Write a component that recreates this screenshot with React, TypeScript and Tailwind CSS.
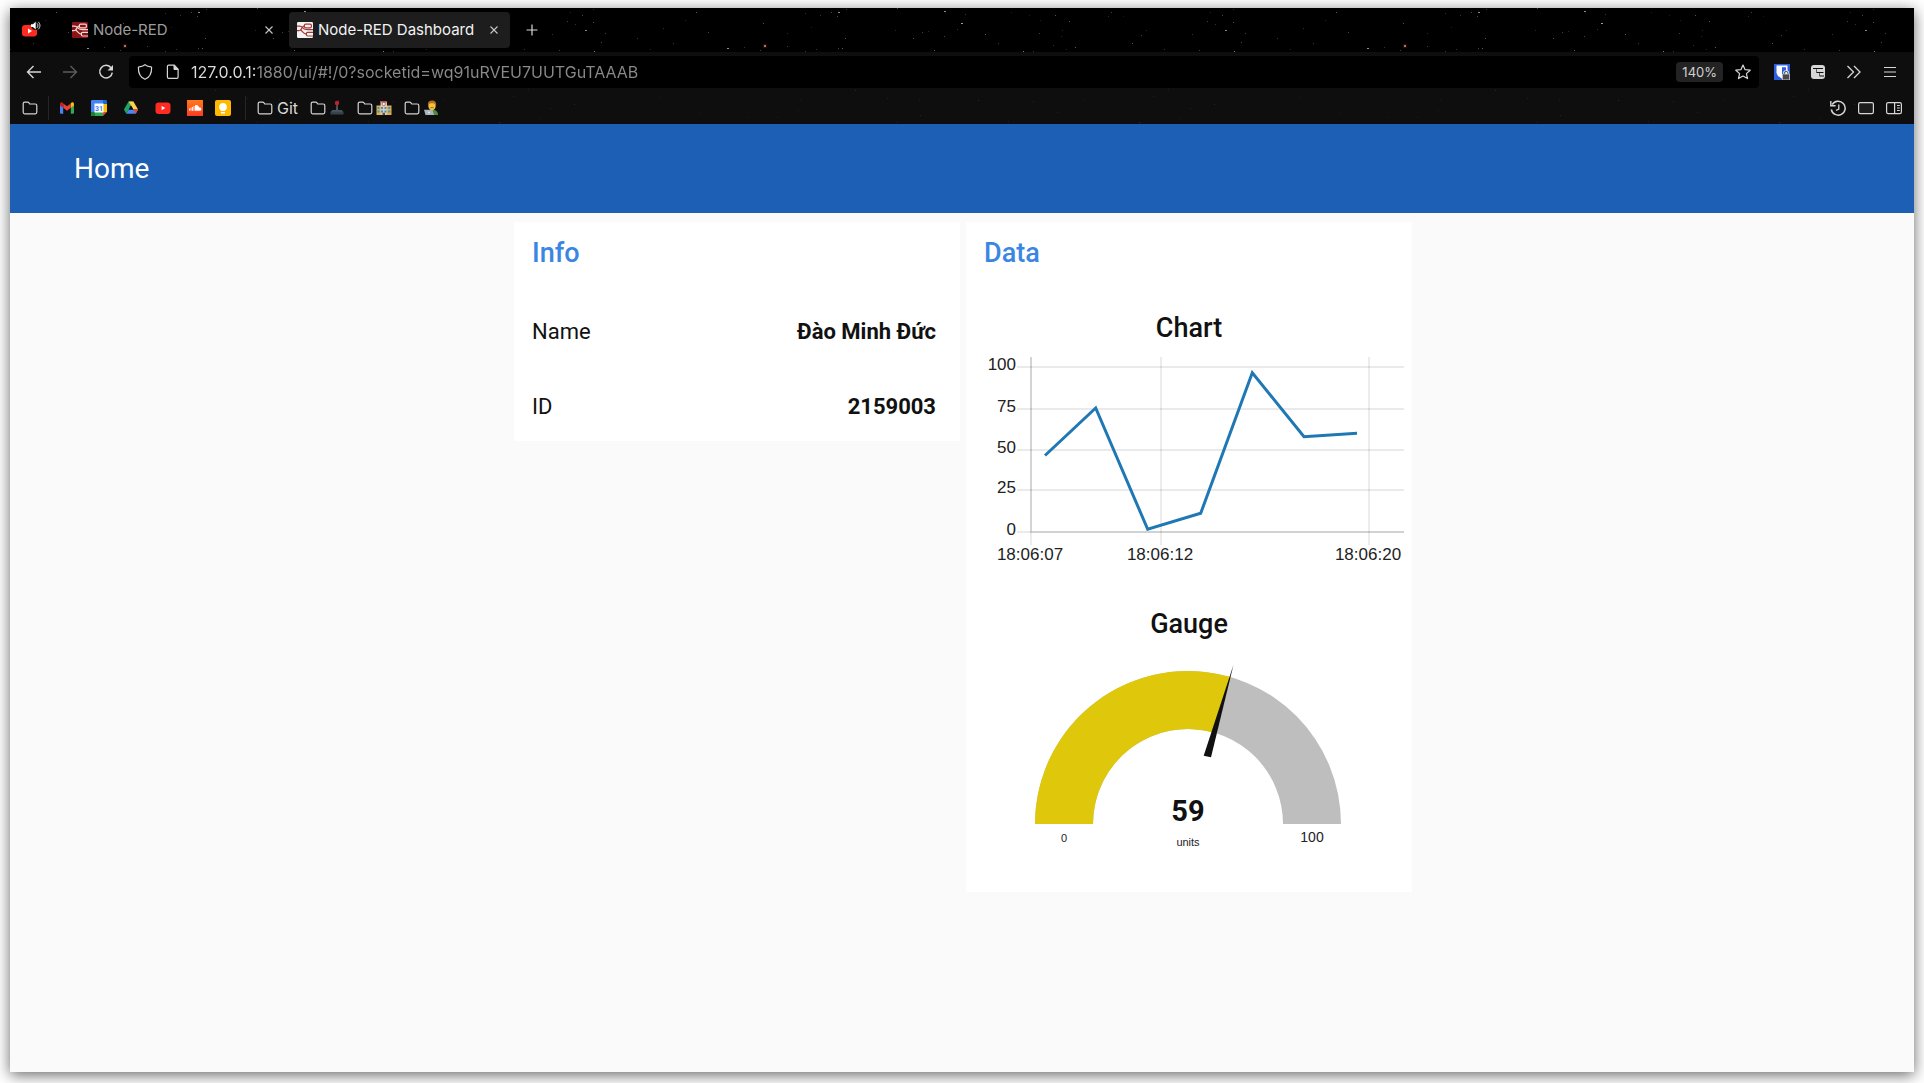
import React from "react";

const stars: [number, number, number][] = [
  [98, 4, 0.7], [97, 8, 0.35], [91, 4, 0.35], [106, 1, 0.25], [157, 0, 0.35], [204, 3, 0.7],
  [221, 15, 0.8], [225, 6, 0.25], [217, 21, 0.25], [245, 26, 0.45], [300, 12, 0.15], [289, 7, 0.15],
  [315, 7, 0.4], [329, 13, 0.4], [299, 25, 0.3], [321, 28, 0.2], [322, 22, 0.2], [335, 39, 0.45],
  [371, 4, 0.3], [368, 8, 0.2], [401, 27, 0.3], [392, 35, 0.4], [383, 8, 0.12], [406, 22, 0.2],
  [467, 13, 0.3], [482, 7, 0.35], [485, 22, 0.65], [475, 16, 0.25], [470, 4, 0.2], [505, 25, 0.3],
  [501, 34, 0.35], [493, 14, 0.4], [494, 43, 0.6], [493, 1, 0.2], [452, 26, 0.25], [459, 42, 0.3],
  [424, 41, 0.25], [283, 43, 0.6], [293, 43, 0.25], [258, 35, 0.3], [194, 42, 0.45], [173, 30, 0.4],
  [182, 24, 0.3], [188, 23, 0.2], [204, 28, 0.3], [155, 22, 0.2], [105, 30, 0.4], [102, 40, 0.45],
  [98, 40, 0.35], [76, 41, 0.25], [47, 38, 0.3], [47, 25, 0.2], [65, 5, 0.25], [80, 7, 0.25],
  [23, 15, 0.4], [20, 42, 0.3], [4, 39, 0.25], [65, 43, 0.25], [71, 19, 0.15], [271, 4, 0.15],
  [313, 37, 0.25], [326, 41, 0.2], [537, 30, 0.25], [563, 20, 0.25], [596, 4, 0.4], [608, 24, 0.35],
  [573, 35, 0.3], [627, 40, 0.7], [550, 41, 0.2], [585, 12, 0.2],
];

const faintStars: [number, number, number][] = [
  [115, 2, 0.14], [147, 10, 0.1], [179, 11, 0.09], [60, 12, 0.08], [238, 12, 0.16], [293, 13, 0.12],
  [180, 27, 0.12], [268, 33, 0.1], [344, 11, 0.1], [399, 34, 0.15], [440, 30, 0.08], [450, 20, 0.12],
  [474, 16, 0.14], [413, 8, 0.1], [37, 29, 0.08], [8, 29, 0.08], [58, 22, 0.08], [428, 1, 0.1],
  [157, 34, 0.12], [317, 24, 0.08], [560, 9, 0.1], [600, 25, 0.1],
];

function Starfield({ id, points, orange }: { id: string; points: [number, number, number][]; orange?: boolean }) {
  return (
    <svg aria-hidden="true" className="pointer-events-none absolute inset-0 h-full w-full">
      <defs>
        <pattern id={id} x="90" y="0" width="640" height="48" patternUnits="userSpaceOnUse">
          {points.map(([x, y, o]) => (
            <rect key={`${x}-${y}`} x={x} y={y} width={o > 0.6 ? 2 : 1} height="1" fill="#fff" opacity={o * 0.8} />
          ))}
          {orange && (
            <>
              <rect x="23" y="36" width="4" height="4" fill="#4a2412" opacity="0.4" />
              <rect x="24" y="37" width="2" height="2" fill="#b0705a" />
            </>
          )}
        </pattern>
      </defs>
      <rect width="100%" height="100%" fill={`url(#${id})`} />
    </svg>
  );
}

function NodeRedIcon({ bg, fg }: { bg: string; fg: string }) {
  return (
    <svg viewBox="0 0 16 16" className="size-4 shrink-0" aria-hidden="true">
      <rect width="16" height="16" rx="1.2" fill={bg} />
      <g fill="none" stroke={fg} strokeWidth="1.2">
        <rect x="7.4" y="2.2" width="7" height="3.6" rx="1.2" />
        <rect x="9.4" y="10.4" width="7.5" height="3.6" rx="1.2" />
        <path d="M0 4.2h2.5c1.6 0 2.2.3 3.2 1.4 1 1.100 1.800 1.700 3.300 1.900 2 .3 3.500.2 7 .2" />
        <path d="M7.400 3.900C5 3.900 5 7.300 3.200 8.200 2 8.700 1 8.700 0 8.700" />
        <path d="M3.600 8.200c2 .4 2.500 3.900 5.800 3.900" />
      </g>
    </svg>
  );
}

function YoutubeIcon() {
  return (
    <svg viewBox="0 0 16 16" className="size-4" aria-hidden="true">
      <rect x="0.500" y="2.500" width="15" height="11.500" rx="3.200" fill="#ff2a20" />
      <path d="M6.600 5.900v4.400l3.800-2.200z" fill="#fff" />
    </svg>
  );
}

function FolderIcon() {
  return (
    <svg viewBox="0 0 16 16" className="size-4 shrink-0" aria-hidden="true">
      <path
        d="M1.200 3.600c0-.9.600-1.500 1.500-1.500h3c.5 0 .8.200 1.100.6l.9 1.300h5.600c.9 0 1.500.6 1.500 1.500v6.800c0 .9-.6 1.500-1.500 1.500H2.700c-.9 0-1.500-.6-1.500-1.500z"
        fill="none"
        stroke="#d4d4d4"
        strokeWidth="1.200"
      />
    </svg>
  );
}

function JoystickIcon() {
  return (
    <svg viewBox="0 0 16 16" className="size-4 shrink-0" aria-hidden="true">
      <path d="M7.300 4h1.500l.4 7H6.900z" fill="#50595f" />
      <circle cx="8" cy="3" r="2.200" fill="#c4202f" />
      <path d="M3.500 10h9l2 2v2.600h-13V12z" fill="#37424a" />
      <path d="M3.500 10h9l1.500 1.700H2z" fill="#4a565f" />
    </svg>
  );
}

function SchoolIcon() {
  return (
    <svg viewBox="0 0 16 16" className="size-4 shrink-0" aria-hidden="true">
      <rect x="0.500" y="5.500" width="15" height="9.500" fill="#e0b04a" />
      <rect x="4.500" y="1" width="6.500" height="14" fill="#d9cdb6" />
      <rect x="4.500" y="1" width="6.500" height="1.500" fill="#b8544a" />
      <circle cx="7.800" cy="4" r="1.600" fill="#fff" stroke="#b23a3a" strokeWidth="0.700" />
      <g fill="#3f8fc4">
        <rect x="1.500" y="7" width="2" height="2" />
        <rect x="1.500" y="10.500" width="2" height="2" />
        <rect x="5" y="7" width="2" height="2" />
        <rect x="8.500" y="7" width="2" height="2" />
        <rect x="5" y="10.500" width="2" height="2" />
        <rect x="8.500" y="10.500" width="2" height="2" />
        <rect x="12.300" y="7" width="2" height="2" />
        <rect x="12.300" y="10.500" width="2" height="2" />
      </g>
      <rect x="6.500" y="12.800" width="2.500" height="2.200" fill="#6e4a2b" />
    </svg>
  );
}

function TechnologistIcon() {
  return (
    <svg viewBox="0 0 16 16" className="size-4 shrink-0" aria-hidden="true">
      <path d="M4 15c0-4 2-5.500 5-5.500s6 1.500 6 5.500z" fill="#4f8a3a" />
      <ellipse cx="9" cy="5.700" rx="3.700" ry="4.600" fill="#f4c13d" />
      <path d="M4.800 5.200C4.600 2 6.500.6 9 .6s4.400 1.400 4.200 4.600C12 3.800 11 3.200 9 3.200S6 3.800 4.800 5.200z" fill="#b3701e" />
      <path d="M7.300 7.600h3.400" stroke="#9a5a1a" strokeWidth="0.800" />
      <path d="M1 9.800h8.500l1.500 5.200H2.500z" fill="#a9b4bc" />
      <circle cx="6" cy="12.400" r="0.900" fill="#e8eef2" />
    </svg>
  );
}

function GmailIcon() {
  return (
    <svg viewBox="0 0 16 16" className="size-4" aria-hidden="true">
      <path d="M1 4.500v8.300c0 .5.400.9.900.9h2.300V7z" fill="#4285f4" />
      <path d="M15 4.500v8.300c0 .5-.4.900-.9.900h-2.300V7z" fill="#34a853" />
      <path d="M11.800 3.500V7.800L15 5.400V4c0-1.500-1.600-2.100-2.600-1.300z" fill="#fbbc04" />
      <path d="M4.200 7.800V3.400L8 6.300l3.800-2.900v4.400L8 10.700z" fill="#ea4335" />
      <path d="M1 4v1.400l3.200 2.400V3.500l-.6-.8C2.600 1.900 1 2.500 1 4z" fill="#c5221f" />
    </svg>
  );
}

function CalendarIcon() {
  return (
    <svg viewBox="0 0 16 16" className="size-4" aria-hidden="true">
      <path d="M1.300 0H12v4H4v12H1.300C.6 16 0 15.400 0 14.700V1.300C0 .6.6 0 1.300 0z" fill="#4285f4" />
      <path d="M12 0h2.700c.7 0 1.300.6 1.300 1.300V4h-4z" fill="#1967d2" />
      <path d="M12 4h4v8h-4z" fill="#fbbc04" />
      <path d="M4 12h8v4H1.300C.6 16 0 15.400 0 14.700V12z" fill="#34a853" />
      <path d="M0 4h4v8H0z" fill="#4285f4" />
      <path d="M0 12h4v4H1.300C.6 16 0 15.400 0 14.700z" fill="#188038" />
      <path d="M12 12h4l-4 4z" fill="#ea4335" />
      <rect x="3.500" y="3.500" width="9" height="9" fill="#fff" />
      <text x="8" y="10.500" textAnchor="middle" fontSize="7" fontWeight="700" fontFamily="Roboto, sans-serif" fill="#4285f4">
        31
      </text>
    </svg>
  );
}

function DriveIcon() {
  return (
    <svg viewBox="0 0 16 16" className="size-4" aria-hidden="true">
      <path d="M5.600 1.500h4.800L5.800 9.400 3.300 13.700.9 9.600z" fill="#1fa463" />
      <path d="M5.600 1.500h4.800l4.700 8.100h-4.800z" fill="#ffd04b" />
      <path d="M5.700 9.600h9.400l-2.400 4.200H3.300z" fill="#4688f4" />
      <path d="M10.300 9.600h4.800l-2.400 4.200z" fill="#ea4335" />
      <path d="M8 5.600l2.300 4H5.700z" fill="#0e0e0e" />
    </svg>
  );
}

function SoundcloudIcon() {
  return (
    <svg viewBox="0 0 16 16" className="size-4" aria-hidden="true">
      <defs>
        <linearGradient id="sc" x1="0" y1="0" x2="0" y2="1">
          <stop offset="0" stopColor="#ff7a1a" />
          <stop offset="1" stopColor="#ff3a22" />
        </linearGradient>
      </defs>
      <rect width="16" height="16" fill="url(#sc)" />
      <path d="M2.500 8.500v2M4 7.500v3.300M5.500 7v3.800M7 6v4.800" stroke="#fff" strokeWidth="0.900" />
      <path d="M8 5.300c2.200-.8 3.700.5 4 2.300 1.300-.3 2.300.4 2.300 1.600 0 1-.7 1.600-1.700 1.600H8z" fill="#fff" />
    </svg>
  );
}

function KeepIcon() {
  return (
    <svg viewBox="0 0 16 16" className="size-4" aria-hidden="true">
      <rect width="16" height="16" rx="2" fill="#ffba00" />
      <path d="M8 3a4 4 0 0 0-2 7.400V11h4v-.6A4 4 0 0 0 8 3z" fill="#fff" />
      <rect x="6" y="12" width="4" height="1.500" fill="#fff" />
    </svg>
  );
}

function CloseIcon() {
  return (
    <svg viewBox="0 0 16 16" className="size-4" aria-hidden="true">
      <path d="M4.500 4.500l7 7M11.500 4.500l-7 7" stroke="currentColor" strokeWidth="1.100" />
    </svg>
  );
}

function Tab({ title, active }: { title: string; active?: boolean }) {
  return (
    <div
      className={
        active
          ? "flex h-9 w-[221px] items-center rounded bg-[#1d1d1d] px-2 text-[#f2f2f2]"
          : "flex h-9 w-[221px] items-center rounded px-2 text-[#9c9c9c]"
      }
    >
      <button type="button" className="flex min-w-0 flex-1 items-center gap-[5px] text-left">
        {active ? <NodeRedIcon bg="#f4f4f4" fg="#a83a3a" /> : <NodeRedIcon bg="#8c1414" fg="#f0dada" />}
        <span className="whitespace-nowrap text-[15px] leading-5">{title}</span>
      </button>
      <button type="button" aria-label={`Close ${title}`} className="text-[#c8c8c8]">
        <CloseIcon />
      </button>
    </div>
  );
}

function TabStrip() {
  return (
    <div className="relative flex h-11 items-center gap-1 bg-black px-1">
      <Starfield id="stars" points={stars} orange />
      <div className="relative flex items-center gap-1">
        <button type="button" aria-label="YouTube, playing audio" className="flex h-9 w-[46px] items-center pl-[7px]">
          <svg viewBox="0 0 20 20" className="size-5" aria-hidden="true">
            <rect x="1" y="5" width="15" height="11.500" rx="3.200" fill="#ff2a20" />
            <path d="M7 8.500v5l4-2.500z" fill="#fff" />
            <circle cx="14.500" cy="5.500" r="4.500" fill="#111" />
            <path d="M10 4.200h2l2.700-2.500v7.800l-2.700-2.500h-2z" fill="#fff" />
            <path d="M16 3.400c1.200 1.200 1.200 3.200 0 4.400M17.300 1.900c2.200 2.200 2.200 5.200 0 7.400" fill="none" stroke="#ddd" strokeWidth="1" />
          </svg>
        </button>
        <Tab title="Node-RED" />
        <Tab title="Node-RED Dashboard" active />
        <button type="button" aria-label="New tab" className="ml-2.5 text-[#d8d8d8]">
          <svg viewBox="0 0 16 16" className="size-4" aria-hidden="true">
            <path d="M8 2.500v11M2.500 8h11" stroke="currentColor" strokeWidth="1.200" />
          </svg>
        </button>
      </div>
    </div>
  );
}

function Toolbar() {
  return (
    <div className="flex h-9 items-center bg-[#0e0e0e] pt-1 text-[#d6d6d6]">
      <div className="flex w-[119px] items-center gap-5 pl-4">
        <button type="button" aria-label="Back">
          <svg viewBox="0 0 16 16" className="size-4" aria-hidden="true">
            <path d="M7.500 2L1.500 8l6 6M1.800 8H15" fill="none" stroke="currentColor" strokeWidth="1.400" />
          </svg>
        </button>
        <button type="button" aria-label="Forward" className="text-[#5c5c5c]">
          <svg viewBox="0 0 16 16" className="size-4" aria-hidden="true">
            <path d="M8.500 2l6 6-6 6M14.200 8H1" fill="none" stroke="currentColor" strokeWidth="1.400" />
          </svg>
        </button>
        <button type="button" aria-label="Reload">
          <svg viewBox="0 0 16 16" className="size-4" aria-hidden="true">
            <path d="M13.200 4A6.300 6.300 0 1 0 14.300 8.600" fill="none" stroke="currentColor" strokeWidth="1.500" />
            <path d="M15 1v5.500H9.500z" fill="currentColor" />
          </svg>
        </button>
      </div>
      <div className="flex h-8 min-w-0 flex-1 items-center rounded bg-black pl-2 pr-2">
        <button type="button" aria-label="Tracking protection">
          <svg viewBox="0 0 16 16" className="size-4" aria-hidden="true">
            <path
              d="M8 .8c1.700 1.300 3.800 2 6 2.100.4 0 .6.300.6.600C14.800 9.500 12.300 13.500 8 15.300 3.700 13.500 1.200 9.500 1.400 3.500c0-.3.200-.6.6-.6 2.200-.1 4.300-.8 6-2.100z"
              fill="none"
              stroke="currentColor"
              strokeWidth="1.200"
            />
          </svg>
        </button>
        <button type="button" aria-label="Site information" className="ml-3">
          <svg viewBox="0 0 16 16" className="size-4" aria-hidden="true">
            <path d="M3.700 1.200h5.600l3.800 4v7.900c0 .8-.5 1.300-1.300 1.300H3.700c-.8 0-1.300-.5-1.300-1.300V2.500c0-.8.500-1.300 1.300-1.300z" fill="none" stroke="currentColor" strokeWidth="1.200" />
            <path d="M9 1.200v4.300h4.100z" fill="currentColor" stroke="currentColor" />
          </svg>
        </button>
        <input
          type="text"
          aria-label="Address"
          defaultValue="127.0.0.1:1880/ui/#!/0?socketid=wq91uRVEU7UUTGuTAAAB"
          className="ml-2.5 min-w-0 flex-1 bg-[linear-gradient(90deg,#dedede_65px,#8a8a8a_65px)] bg-clip-text text-base text-transparent outline-none"
        />
        <button type="button" className="h-5 rounded-sm bg-[#232323] px-1.5 text-[13px] leading-5 text-[#d0d0d0]">
          140%
        </button>
        <button type="button" aria-label="Bookmark this page" className="ml-3">
          <svg viewBox="0 0 16 16" className="size-4" aria-hidden="true">
            <path
              d="M8 1l2.100 4.700 5.100.5-3.800 3.400 1.100 5L8 12l-4.500 2.600 1.100-5L.8 6.200l5.100-.5z"
              fill="none"
              stroke="currentColor"
              strokeWidth="1.200"
              strokeLinejoin="round"
            />
          </svg>
        </button>
      </div>
      <div className="flex items-center gap-5 pl-[15px] pr-4">
        <button type="button" aria-label="Bitwarden">
          <svg viewBox="0 0 16 16" className="size-4" aria-hidden="true">
            <rect width="16" height="16" fill="#2d5fe0" />
            <path d="M2.500 1.500h11v6.800c0 3-3 5-5.500 6.400-2.500-1.400-5.500-3.400-5.500-6.400z" fill="#fff" />
            <path d="M8 3.200h4v5c0 1.800-2 3.200-4 4.300z" fill="#2d5fe0" />
            <path d="M10.200 10.500V9.300a1.900 1.900 0 0 1 3.800 0v1.200" fill="none" stroke="#e4e4e4" strokeWidth="2.400" />
            <rect x="8.300" y="10" width="7.400" height="6" rx="1" fill="#4a4a4a" stroke="#e4e4e4" strokeWidth="0.800" />
            <path d="M10.200 10.500V9.300a1.900 1.900 0 0 1 3.800 0v1.200" fill="none" stroke="#555" strokeWidth="1" />
          </svg>
        </button>
        <button type="button" aria-label="Save to reader">
          <svg viewBox="0 0 16 16" className="size-4" aria-hidden="true">
            <rect x="1" y="1" width="14" height="14" rx="3" fill="#d6d6d6" />
            <path d="M3 4.500h10M6.500 8.500h7M9.500 12h4.500" stroke="#0e0e0e" strokeWidth="1.200" />
            <path d="M6.500 5v3.500M9.500 9v3" stroke="#0e0e0e" strokeWidth="0.600" />
          </svg>
        </button>
        <button type="button" aria-label="More tools">
          <svg viewBox="0 0 16 16" className="size-4" aria-hidden="true">
            <path d="M1.500 2l6 6-6 6M8 2l6 6-6 6" fill="none" stroke="currentColor" strokeWidth="1.300" />
          </svg>
        </button>
        <button type="button" aria-label="Open application menu">
          <svg viewBox="0 0 16 16" className="size-4" aria-hidden="true">
            <path d="M2 3.500h12M2 8h12M2 12.500h12" stroke="currentColor" strokeWidth="1.200" />
          </svg>
        </button>
      </div>
    </div>
  );
}

function BookmarksBar() {
  return (
    <div className="relative flex h-9 items-center bg-[#0e0e0e] pb-1 pt-2 text-[#d6d6d6]">
      <Starfield id="faint-stars" points={faintStars} />
      <div className="relative flex w-full items-center pl-3 pr-3">
        <a href="#all" aria-label="All bookmarks"><FolderIcon /></a>
        <span className="ml-2.5 h-6 w-px bg-[#262626]" />
        <div className="ml-2.5 flex items-center gap-4">
          <a href="#gmail" aria-label="Gmail"><GmailIcon /></a>
          <a href="#calendar" aria-label="Calendar"><CalendarIcon /></a>
          <a href="#drive" aria-label="Drive"><DriveIcon /></a>
          <a href="#youtube" aria-label="YouTube"><YoutubeIcon /></a>
          <a href="#soundcloud" aria-label="SoundCloud"><SoundcloudIcon /></a>
          <a href="#keep" aria-label="Keep" className="-ml-1"><KeepIcon /></a>
        </div>
        <span className="ml-3.5 h-6 w-px bg-[#262626]" />
        <div className="ml-[11px] flex items-center gap-3">
          <button type="button" className="flex items-center gap-1 text-base leading-4">
            <FolderIcon />
            Git
          </button>
          <button type="button" aria-label="Games" className="flex items-center gap-[3px]"><FolderIcon /><JoystickIcon /></button>
          <button type="button" aria-label="School" className="flex items-center gap-[3px]"><FolderIcon /><SchoolIcon /></button>
          <button type="button" aria-label="Work" className="flex items-center gap-[3px]"><FolderIcon /><TechnologistIcon /></button>
        </div>
        <div className="ml-auto flex items-center gap-3">
          <button type="button" aria-label="History">
            <svg viewBox="0 0 16 16" className="size-4" aria-hidden="true">
              <path d="M2.200 4.500A7 7 0 1 1 1.300 9.500" fill="none" stroke="currentColor" strokeWidth="1.500" />
              <path d="M.8 1v4.800h4.800" fill="none" stroke="currentColor" strokeWidth="1.400" />
              <path d="M8.800 4.500V9L6 10.500" fill="none" stroke="currentColor" strokeWidth="1.300" />
            </svg>
          </button>
          <button type="button" aria-label="Container">
            <svg viewBox="0 0 16 16" className="size-4" aria-hidden="true">
              <rect x="0.600" y="2.600" width="14.800" height="11" rx="1.600" fill="#1c1c1c" stroke="currentColor" strokeWidth="1.200" />
            </svg>
          </button>
          <button type="button" aria-label="Sidebars">
            <svg viewBox="0 0 16 16" className="size-4" aria-hidden="true">
              <rect x="0.600" y="2.600" width="14.800" height="11" rx="1.600" fill="none" stroke="currentColor" strokeWidth="1.200" />
              <path d="M8.600 2.600v11M11 5.500h2.800M11 8h2.800M11 10.500h2.800" stroke="currentColor" strokeWidth="1.200" />
            </svg>
          </button>
        </div>
      </div>
    </div>
  );
}

function InfoRow({ label, value }: { label: string; value: string }) {
  return (
    <div className="flex h-[75px] items-center justify-between pl-[18px] pr-6 pt-[7px] text-[22px] leading-7 text-[#111]">
      <dt>{label}</dt>
      <dd className="font-bold">{value}</dd>
    </div>
  );
}

const yTicks = [
  { v: 100, y: 17 },
  { v: 75, y: 59 },
  { v: 50, y: 100 },
  { v: 25, y: 140 },
  { v: 0, y: 182 },
];

const xTicks = [
  { t: "18:06:07", x: 65 },
  { t: "18:06:12", x: 195 },
  { t: "18:06:20", x: 403 },
];

function LineChart() {
  return (
    <svg viewBox="0 0 446 220" className="block w-full" role="img" aria-label="Line chart">
      <g stroke="#000" strokeWidth="2">
        {yTicks.map((t) => (
          <path key={t.v} d={`M51 ${t.y}H438`} opacity="0.08" />
        ))}
        {xTicks.map((t) => (
          <path key={t.t} d={`M${t.x} 7V195`} opacity="0.07" />
        ))}
        <path d="M65 7V182H438" fill="none" opacity="0.1" />
      </g>
      <path
        d="M79 105.500L129.700 58 181.700 179.300 234.700 163.300 286.300 22.700 338 86.700 391 83.300"
        fill="none"
        stroke="#1f77b4"
        strokeWidth="3"
      />
      <g fontFamily="Liberation Sans, sans-serif" fontSize="17" fill="#222">
        {yTicks.map((t) => (
          <text key={t.v} x="50" y={t.y + 3} textAnchor="end">
            {t.v}
          </text>
        ))}
        {xTicks.map((t) => (
          <text key={t.t} x={t.x - 1} y="210" textAnchor="middle">
            {t.t}
          </text>
        ))}
      </g>
    </svg>
  );
}

function Gauge() {
  return (
    <svg viewBox="0 0 446 230" className="block w-full" role="img" aria-label="Gauge at 59 units">
      <path d="M69 166A153 153 0 0 1 375 166H317A95 95 0 0 0 127 166z" fill="#bebebe" />
      <path d="M69 166A153 153 0 0 1 264.700 19.100L248.500 74.800A95 95 0 0 0 127 166z" fill="#dfc70c" />
      <path d="M267.500 6.700L237.700 97.700 245 99.300z" fill="#111" />
      <g textAnchor="middle" fill="#111">
        <text x="222" y="163" fontFamily="Roboto, sans-serif" fontSize="29" fontWeight="700">59</text>
        <g fontFamily="Liberation Sans, sans-serif" fontSize="11" fill="#222">
          <text x="222" y="188">units</text>
          <text x="98" y="184">0</text>
          <text x="346" y="184" fontSize="14">100</text>
        </g>
      </g>
    </svg>
  );
}

function CardTitle({ children }: { children: string }) {
  return <h2 className="px-[18px] pt-[15px] text-[27px] font-medium leading-8 text-[#3b86e3]">{children}</h2>;
}

function Dashboard() {
  return (
    <main className="flex flex-1 flex-col bg-[#fafafa] font-[Roboto,sans-serif]">
      <header className="flex h-[89px] items-center bg-[#1d5fb4] px-16">
        <h1 className="text-[28px] leading-8 text-white">Home</h1>
      </header>
      <div className="flex items-start justify-center gap-1.5 pb-6 pl-0.5 pt-[9px]">
        <section className="w-[446px] bg-white">
          <CardTitle>Info</CardTitle>
          <dl className="pt-[22px]">
            <InfoRow label="Name" value="Đào Minh Đức" />
            <InfoRow label="ID" value="2159003" />
          </dl>
        </section>
        <section className="w-[446px] bg-white pb-1">
          <CardTitle>Data</CardTitle>
          <h3 className="pt-[43px] text-center text-[27px] font-medium leading-8 text-[#111]">Chart</h3>
          <div className="pt-1.5">
            <LineChart />
          </div>
          <h3 className="pt-[38px] text-center text-[27px] font-medium leading-8 text-[#111]">Gauge</h3>
          <div className="pt-[18px]">
            <Gauge />
          </div>
        </section>
      </div>
    </main>
  );
}

export default function App() {
  return (
    <div className="flex min-h-screen flex-col bg-white px-2.5 pb-[11px] pt-2">
      <div className="flex flex-1 flex-col shadow-[0_3px_14px_rgba(0,0,0,0.6)]">
        <div className="font-[Inter,sans-serif]">
          <TabStrip />
          <Toolbar />
          <BookmarksBar />
        </div>
        <Dashboard />
      </div>
    </div>
  );
}
